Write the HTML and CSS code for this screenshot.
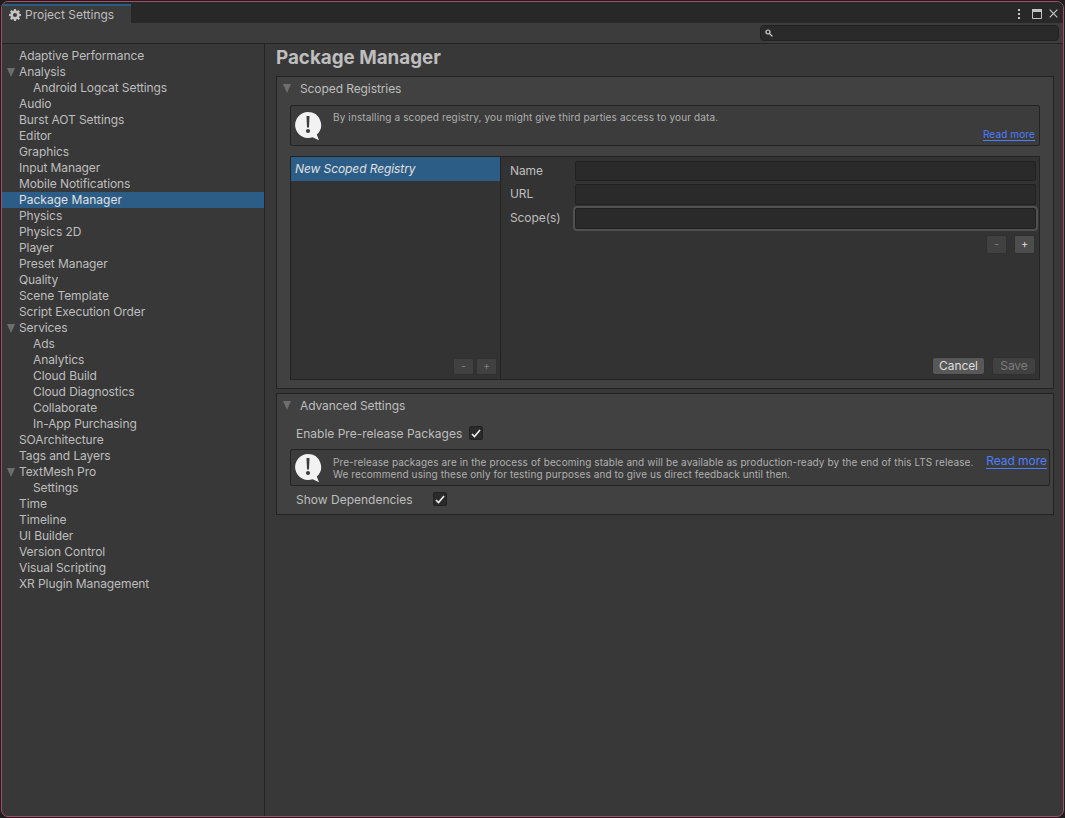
FILE: index.html
```html
<!DOCTYPE html>
<html lang="en">
<head>
<meta charset="utf-8">
<title>Project Settings</title>
<link rel="stylesheet" href="styles.css">
</head>
<body>
<div class="window">
  <header class="tabbar">
    <div class="tab">
      <svg class="gear" width="12" height="12" viewBox="0 0 14 14"><path fill="#c4c4c4" fill-rule="evenodd" d="M5.8 0h2.400l.3 1.900 1 .4 1.600-1.100 1.700 1.700-1.100 1.600.4 1 1.900.3v2.400l-1.900.3-.4 1 1.100 1.600-1.700 1.700-1.600-1.100-1 .4-.3 1.900H5.800l-.3-1.900-1-.4-1.600 1.100-1.700-1.700 1.100-1.600-.4-1L0 8.200V5.800l1.900-.3.4-1-1.100-1.600 1.700-1.700 1.600 1.100 1-.4zM7 4.600a2.400 2.400 0 1 0 0 4.800 2.400 2.400 0 0 0 0-4.800z"/></svg>
      <span>Project Settings</span>
    </div>
    <div class="win-icons">
      <svg class="ic-menu" width="4" height="12" viewBox="0 0 4 12"><g fill="#c4c4c4"><rect x="1" y="1" width="2" height="2"/><rect x="1" y="5" width="2" height="2"/><rect x="1" y="9" width="2" height="2"/></g></svg>
      <svg class="ic-max" width="10" height="10" viewBox="0 0 10 10"><path fill="none" stroke="#c4c4c4" d="M.5 1.500h9v8h-9z"/><rect x="0" y="0" width="10" height="3" fill="#c4c4c4"/></svg>
      <svg class="ic-close" width="9" height="9" viewBox="0 0 9 9"><path stroke="#c4c4c4" stroke-width="1.200" d="M.7.7l7.600 7.600M8.300.7L.7 8.300"/></svg>
    </div>
  </header>
  <div class="toolbar">
    <div class="search">
      <svg width="8" height="8" viewBox="0 0 8 8"><circle cx="3" cy="3" r="2" fill="none" stroke="#d8d8d8" stroke-width="1.200"/><path d="M4.600 4.600L7.400 7.400" stroke="#d8d8d8" stroke-width="1.300"/></svg>
    </div>
  </div>
  <div class="main">
    <nav class="sidebar">
      <div class="row">Adaptive Performance</div>
      <div class="row"><i class="tri side"></i>Analysis</div>
      <div class="row sub">Android Logcat Settings</div>
      <div class="row">Audio</div>
      <div class="row">Burst AOT Settings</div>
      <div class="row">Editor</div>
      <div class="row">Graphics</div>
      <div class="row">Input Manager</div>
      <div class="row">Mobile Notifications</div>
      <div class="row selected">Package Manager</div>
      <div class="row">Physics</div>
      <div class="row">Physics 2D</div>
      <div class="row">Player</div>
      <div class="row">Preset Manager</div>
      <div class="row">Quality</div>
      <div class="row">Scene Template</div>
      <div class="row">Script Execution Order</div>
      <div class="row"><i class="tri side"></i>Services</div>
      <div class="row sub">Ads</div>
      <div class="row sub">Analytics</div>
      <div class="row sub">Cloud Build</div>
      <div class="row sub">Cloud Diagnostics</div>
      <div class="row sub">Collaborate</div>
      <div class="row sub">In-App Purchasing</div>
      <div class="row">SOArchitecture</div>
      <div class="row">Tags and Layers</div>
      <div class="row"><i class="tri side"></i>TextMesh Pro</div>
      <div class="row sub">Settings</div>
      <div class="row">Time</div>
      <div class="row">Timeline</div>
      <div class="row">UI Builder</div>
      <div class="row">Version Control</div>
      <div class="row">Visual Scripting</div>
      <div class="row">XR Plugin Management</div>
    </nav>
    <main class="content">
      <h1 class="title">Package Manager</h1>

      <section class="panel registries">
        <div class="panel-head"><i class="tri"></i>Scoped Registries</div>
        <div class="help help-top">
          <svg class="bubble" width="28" height="31" viewBox="0 0 28 31"><path fill="#f2f2f2" d="M14 1a13 13 0 1 0 4.600 25.200l6.400 3-2.200-5.600A13 13 0 0 0 14 1z"/><path fill="#3c3c3c" d="M12.500 5h3l-.5 11.500h-2z"/><circle cx="14" cy="20" r="2.100" fill="#3c3c3c"/></svg>
          <p>By installing a scoped registry, you might give third parties access to your data.</p>
          <a class="link small">Read more</a>
        </div>
        <div class="editor">
          <div class="list">
            <div class="list-item">New Scoped Registry</div>
            <div class="btn-pair">
              <span class="mini disabled">-</span><span class="mini disabled">+</span>
            </div>
          </div>
          <div class="form">
            <div class="field f-name"><label>Name</label><span class="input"></span></div>
            <div class="field f-url"><label>URL</label><span class="input"></span></div>
            <div class="field f-scope"><label>Scope(s)</label><span class="input focus"></span></div>
            <div class="scope-btns">
              <span class="mini wide disabled">-</span><span class="mini wide">+</span>
            </div>
            <div class="actions">
              <span class="btn">Cancel</span><span class="btn disabled">Save</span>
            </div>
          </div>
        </div>
      </section>

      <section class="panel advanced">
        <div class="panel-head"><i class="tri"></i>Advanced Settings</div>
        <div class="check-row pre"><span class="check-label">Enable Pre-release Packages</span><span class="check"><svg width="10" height="9" viewBox="0 0 10 9"><path fill="none" stroke="#eee" stroke-width="1.600" d="M1 5l2.500 2.500L9 1"/></svg></span></div>
        <div class="help help-wide">
          <svg class="bubble" width="28" height="31" viewBox="0 0 28 31"><path fill="#f2f2f2" d="M14 1a13 13 0 1 0 4.600 25.200l6.400 3-2.200-5.600A13 13 0 0 0 14 1z"/><path fill="#3c3c3c" d="M12.500 5h3l-.5 11.500h-2z"/><circle cx="14" cy="20" r="2.100" fill="#3c3c3c"/></svg>
          <p>Pre-release packages are in the process of becoming stable and will be available as production-ready by the end of this LTS release.<br>We recommend using these only for testing purposes and to give us direct feedback until then.</p>
          <a class="link">Read more</a>
        </div>
        <div class="check-row dep"><span class="check-label dep-label">Show Dependencies</span><span class="check"><svg width="10" height="9" viewBox="0 0 10 9"><path fill="none" stroke="#eee" stroke-width="1.600" d="M1 5l2.500 2.500L9 1"/></svg></span></div>
      </section>
    </main>
  </div>
</div>
</body>
</html>
```
FILE: styles.css
```css
* { box-sizing: border-box; }
html, body { margin: 0; height: 100%; }
body {
  background: #1e1e1e;
  padding: 1px;
  font-family: Inter, "Noto Sans", sans-serif;
  font-size: 12px;
  letter-spacing: -.09px;
  color: #bebebe;
  overflow: hidden;
}
.window {
  height: 816px;
  border: 1px solid #a54d68;
  border-radius: 7px;
  overflow: hidden;
  display: flex;
  flex-direction: column;
  background: #383838;
}
.tabbar {
  height: 21px;
  flex: none;
  background: #282828;
  display: flex;
  justify-content: space-between;
}
.tab {
  width: 129px;
  margin-top: 2px;
  background: #3c3c3c;
  border-top: 2px solid #2c5d87;
  display: flex;
  align-items: center;
  gap: 4px;
  padding: 0 0 0 7px;
  line-height: 17px;
  letter-spacing: 0;
}
.gear { flex: none; }
.win-icons {
  display: flex;
  align-items: center;
  padding: 2px 5px 0 0;
}
.ic-max { margin-left: 11px; }
.ic-close { margin-left: 7px; }
.toolbar {
  height: 21px;
  flex: none;
  background: #3c3c3c;
  border-bottom: 1px solid #232323;
  display: flex;
  justify-content: flex-end;
  padding: 2px 4px 0 0;
}
.search {
  width: 299px;
  height: 16px;
  background: #2a2a2a;
  border: 1px solid #212121;
  border-radius: 4px;
  display: flex;
  align-items: center;
  padding-left: 4px;
}
.main {
  flex: 1;
  display: flex;
  min-height: 0;
}
.sidebar {
  width: 263px;
  flex: none;
  border-right: 1px solid #232323;
  padding-top: 4px;
}
.row {
  height: 16px;
  line-height: 16px;
  padding-left: 17px;
  position: relative;
  white-space: nowrap;
}
.row.sub { padding-left: 31px; }
.row.selected { background: #2c5d87; color: #e0e0e0; letter-spacing: .03px; }
.tri {
  width: 0;
  height: 0;
  border-left: 4.500px solid transparent;
  border-right: 4.500px solid transparent;
  border-top: 9px solid #6e6e6e;
}
.tri.side { position: absolute; left: 5px; top: 4px; }
.content {
  flex: 1;
  min-width: 0;
  padding: 0 9px 0 11px;
}
.title {
  margin: 0;
  height: 32px;
  line-height: 27px;
  font-size: 18.800px;
  font-weight: 700;
  letter-spacing: 0;
  color: #bebebe;
}
.panel {
  background: #414141;
  border: 1px solid #232323;
}
.registries { height: 313px; margin-bottom: 4px; }
.advanced { height: 122px; }
.panel-head {
  height: 25px;
  display: flex;
  align-items: center;
  gap: 9px;
  padding: 0 0 2px 6px;
}
.advanced .panel-head { height: 24px; }
.help {
  background: #3c3c3c;
  border: 1px solid #232323;
  border-radius: 2px;
  position: relative;
  display: flex;
  align-items: flex-start;
  font-size: 10px;
  line-height: 12px;
}
.help p { margin: 0; white-space: nowrap; color: #b0b0b0; letter-spacing: .1px; }
.help-top p { letter-spacing: .13px; }
.bubble { flex: none; }
.help-top {
  height: 41px;
  margin: 3px 13px 0 13px;
  padding: 5px 0 0 3px;
}
.help-top p { padding: 0 0 0 11px; }
.help-wide {
  height: 37px;
  margin: 0 3px 0 13px;
  padding: 3px 0 0 3px;
}
.help-wide p { padding: 3px 0 0 11px; }
.link {
  position: absolute;
  color: #4c7eff;
  border-bottom: 1px solid #4c7eff;
  font-size: 12px;
  line-height: 14px;
  letter-spacing: -.03px;
}
.link.small { right: 4px; bottom: 4px; font-size: 10px; line-height: 11px; letter-spacing: .12px; }
.help-wide .link { right: 2px; top: 4px; }
.editor {
  height: 224px;
  margin: 10px 13px 0 13px;
  background: #333333;
  border: 1px solid #232323;
  display: flex;
}
.list {
  width: 210px;
  flex: none;
  border-right: 1px solid #232323;
  display: flex;
  flex-direction: column;
}
.list-item {
  height: 24px;
  background: #2c5d87;
  color: #e0e0e0;
  font-style: italic;
  line-height: 24px;
  padding-left: 4px;
}
.btn-pair {
  margin-top: auto;
  display: flex;
  justify-content: flex-end;
  gap: 2px;
  padding: 0 3px 4px 0;
}
.mini {
  width: 21px;
  height: 17px;
  background: #4d4d4d;
  border: 1px solid #303030;
  border-radius: 2px;
  font-size: 11px;
  line-height: 15px;
  text-align: center;
  color: #dedede;
}
.mini.disabled { background: #414141; color: #7c7c7c; }
.mini.wide { height: 19px; line-height: 17px; }
.form {
  flex: 1;
  display: flex;
  flex-direction: column;
  min-width: 0;
  padding: 4px 3px 4px 9px;
}
.field { display: flex; align-items: center; }
.f-name { height: 20px; }
.f-url { height: 21px; margin-top: 3px; }
.f-scope { height: 21px; margin-top: 3px; }
.field label { width: 65px; flex: none; padding-bottom: 2px; }
.input {
  flex: 1;
  height: 100%;
  background: #2a2a2a;
  border: 1px solid #212121;
  border-radius: 2px;
}
.input.focus { outline: 2px solid #505050; }
.scope-btns {
  display: flex;
  justify-content: flex-end;
  gap: 7px;
  margin: 6px 1px 0 0;
}
.actions {
  margin: auto 0 0;
  display: flex;
  justify-content: flex-end;
  gap: 7px;
}
.btn {
  width: 53px;
  height: 18px;
  background: #585858;
  border: 1px solid #303030;
  border-radius: 3px;
  line-height: 16px;
  text-align: center;
  color: #dedede;
}
.btn.disabled { width: 44px; background: #414141; color: #7c7c7c; }
.check-row {
  display: flex;
  align-items: center;
  padding-left: 19px;
  height: 18px;
}
.pre { margin: 6px 0 7px; }
.dep { margin-top: 4px; }
.check-label { margin-right: 7px; letter-spacing: 0; }
.dep-label { width: 137px; margin-right: 0; }
.check {
  width: 14px;
  height: 14px;
  background: #2a2a2a;
  border: 1px solid #212121;
  border-radius: 2px;
  display: flex;
  align-items: center;
  justify-content: center;
}
```
